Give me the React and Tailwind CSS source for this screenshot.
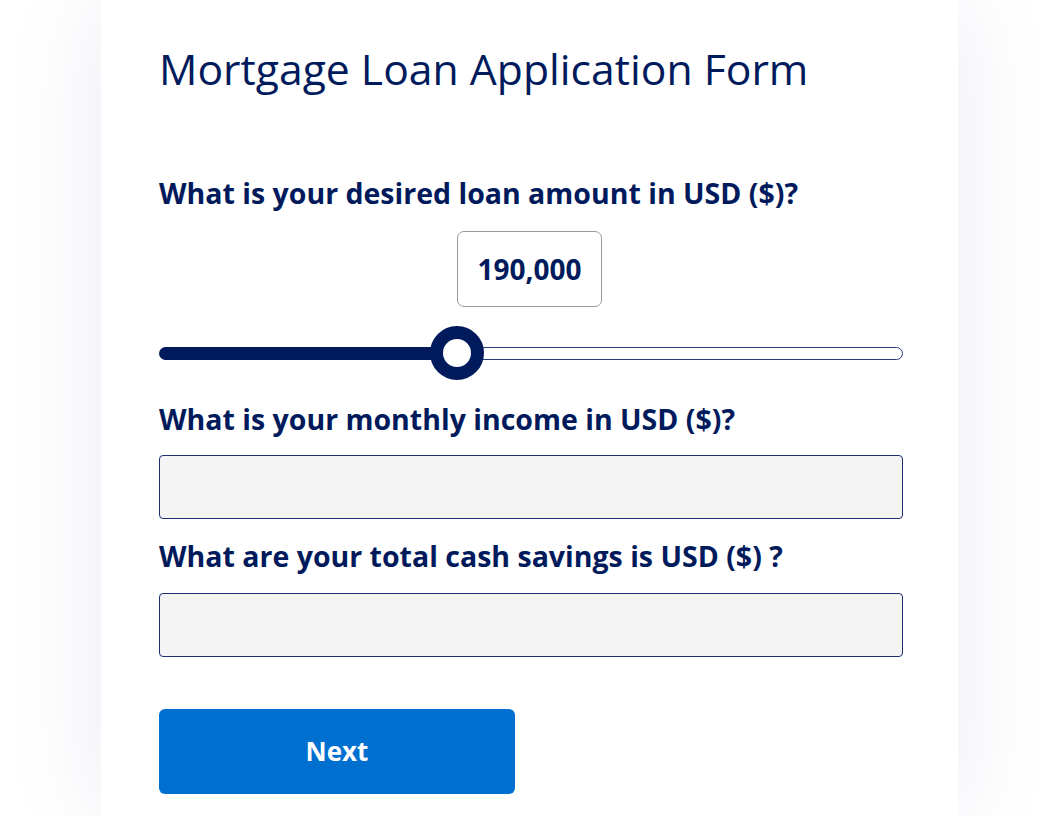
export default function App() {
  const navy = "text-[#001a5c]";
  return (
    <div className="h-[816px] overflow-hidden bg-white">
      <div
        className="ml-[101px] w-[857px] h-[816px] bg-white shadow-[0_0_100px_rgba(20,20,110,0.08)] pl-[58px] pr-[55px] pt-[47px]"
        style={{ fontFamily: '"Open Sans", sans-serif' }}
      >
        <h1 className={`text-[42.7px] leading-[43px] font-normal ${navy}`}>
          Mortgage Loan Application Form
        </h1>
        <label className={`block mt-[89px] text-[28.5px] leading-[28px] font-bold ${navy}`}>
          What is your desired loan amount in USD ($)?
        </label>
        <div className="mt-[24px] flex justify-center pr-[3px]">
          <div className="w-[145px] h-[76px] border border-[#9a9a9a] rounded-[7px] flex items-center justify-center">
            <span className={`text-[28px] font-bold ${navy}`}>190,000</span>
          </div>
        </div>
        <div className="relative mt-[19px] h-[54px] flex items-center">
          <div className="w-full h-[13px] flex">
            <div className="w-[298px] h-full bg-[#001a5c] rounded-l-full" />
            <div className="flex-1 h-full border border-[#24397a] rounded-r-full bg-white" />
          </div>
          <div className="absolute left-[271px] top-0 w-[54px] h-[54px] rounded-full border-[13px] border-[#001a5c] bg-white" />
        </div>
        <label className={`block mt-[25px] text-[28.5px] leading-[28px] font-bold ${navy}`}>
          What is your monthly income in USD ($)?
        </label>
        <div className="mt-[22px] h-[64px] w-full rounded-[4px] border border-[#1c2f73] bg-[#f4f4f4]" />
        <label className={`block mt-[23px] text-[28.5px] leading-[28px] font-bold ${navy}`}>
          What are your total cash savings is USD ($) ?
        </label>
        <div className="mt-[23px] h-[64px] w-full rounded-[4px] border border-[#1c2f73] bg-[#f4f4f4]" />
        <button className="mt-[52px] w-[356px] h-[85px] rounded-[6px] bg-[#0070d0] text-white text-[26px] font-bold">
          Next
        </button>
      </div>
    </div>
  );
}
